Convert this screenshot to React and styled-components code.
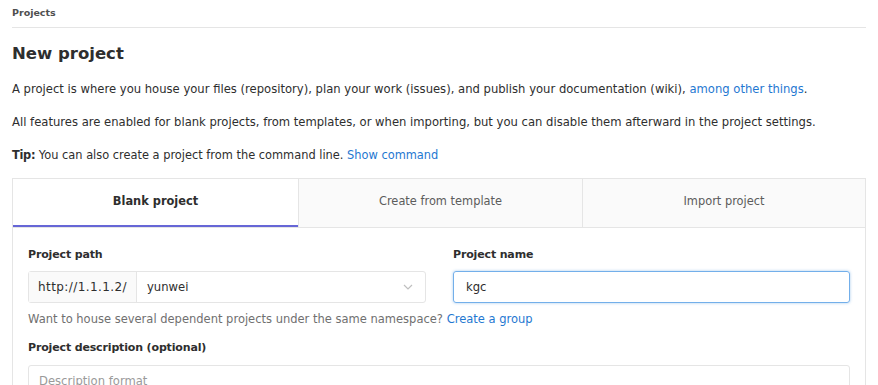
import React from "react";
import styled, { createGlobalStyle } from "styled-components";

const Global = createGlobalStyle`
  html, body { margin: 0; padding: 0; background: #fff; }
  body { font-family: "DejaVu Sans", sans-serif; color: #2e2e2e; }
  * { box-sizing: border-box; }
`;

const Page = styled.div`
  padding: 0 12px 0 12px;
  width: 878px;
  height: 385px;
  overflow: hidden;
`;

const Breadcrumb = styled.div`
  font-size: 9.5px;
  font-weight: 600;
  color: #4f4f4f;
  height: 28px;
  padding-top: 7px;
  border-bottom: 1px solid #e5e5e5;
`;

const Title = styled.h1`
  margin: 16px 0 0;
  font-size: 16.5px;
  font-weight: 600;
  color: #2e2e2e;
  line-height: 20px;
`;

const Para = styled.p`
  margin: ${(p) => p.$top}px 0 0;
  font-size: ${(p) => p.$size || 11.6}px;
  line-height: 16px;
  color: #2e2e2e;
`;

const Strong = styled.b`
  font-weight: 600;
  letter-spacing: -0.3px;
`;

const Link = styled.a`
  color: #1f78d1;
  text-decoration: none;
`;

const Panel = styled.div`
  margin-top: 15px;
  border: 1px solid #e5e5e5;
  border-bottom: none;
  height: 300px;
`;

const Tabs = styled.div`
  display: grid;
  grid-template-columns: 285px 284px 1fr;
  height: 49px;
  border-bottom: 1px solid #e5e5e5;
`;

const Tab = styled.div`
  display: flex;
  align-items: center;
  justify-content: center;
  font-size: 11.4px;
  background: ${(p) => (p.$active ? "#fff" : "#fafafa")};
  color: ${(p) => (p.$active ? "#2e2e2e" : "#5c5c5c")};
  font-weight: ${(p) => (p.$active ? 600 : 400)};
  border-left: ${(p) => (p.$first ? "none" : "1px solid #e5e5e5")};
  box-shadow: ${(p) => (p.$active ? "inset 0 -2px 0 #6666d6" : "none")};
  padding-bottom: 4px;
`;

const Body = styled.div`
  padding: 19px 15px 0 15px;
`;

const Row = styled.div`
  display: grid;
  grid-template-columns: 398px 1fr;
  column-gap: 27px;
`;

const Label = styled.div`
  font-size: 11px;
  font-weight: 600;
  line-height: 16px;
  margin-bottom: 8px;
  color: #2e2e2e;
  letter-spacing: -0.15px;
`;

const InputGroup = styled.div`
  display: flex;
  height: 32px;
  border: 1px solid #e5e5e5;
  border-radius: 3px;
`;

const Addon = styled.div`
  display: flex;
  align-items: center;
  justify-content: center;
  width: 108px;
  background: #fafafa;
  border-right: 1px solid #e5e5e5;
  font-size: 12px;
  letter-spacing: 0.4px;
  color: #2e2e2e;
`;

const Select = styled.div`
  flex: 1;
  display: flex;
  align-items: center;
  justify-content: space-between;
  padding: 0 12px 0 10px;
  font-size: 11.6px;
  color: #2e2e2e;
`;

const Input = styled.div`
  height: 32px;
  border: 1px solid #73afea;
  border-radius: 3px;
  box-shadow: 0 0 3px rgba(31, 120, 209, 0.4);
  display: flex;
  align-items: center;
  padding: 0 12px;
  font-size: 11.6px;
  color: #2e2e2e;
`;

const Help = styled.div`
  font-size: 11.5px;
  color: #707070;
  line-height: 16px;
  margin-top: 8px;
`;

const DescLabel = styled(Label)`
  margin-top: 13px;
  margin-bottom: 9px;
`;

const TextBox = styled.div`
  height: 40px;
  border: 1px solid #e5e5e5;
  border-radius: 3px;
  padding: 8px 10px;
  font-size: 11.6px;
  color: #9a9a9a;
`;

const Chevron = () => (
  <svg width="10" height="6" viewBox="0 0 10 6" fill="none">
    <path d="M1 1l4 4 4-4" stroke="#bfbfbf" strokeWidth="1.2" />
  </svg>
);

export default function App() {
  return (
    <Page>
      <Global />
      <Breadcrumb>Projects</Breadcrumb>
      <Title>New project</Title>
      <Para $top={17}>
        A project is where you house your files (repository), plan your work (issues), and publish your
        documentation (wiki), <Link>among other things</Link>.
      </Para>
      <Para $top={17}>
        All features are enabled for blank projects, from templates, or when importing, but you can disable them
        afterward in the project settings.
      </Para>
      <Para $top={17} $size={11.4}>
        <Strong>Tip:</Strong> You can also create a project from the command line. <Link>Show command</Link>
      </Para>
      <Panel>
        <Tabs>
          <Tab $active $first>Blank project</Tab>
          <Tab>Create from template</Tab>
          <Tab>Import project</Tab>
        </Tabs>
        <Body>
          <Row>
            <div>
              <Label>Project path</Label>
              <InputGroup>
                <Addon>http://1.1.1.2/</Addon>
                <Select>
                  <span>yunwei</span>
                  <Chevron />
                </Select>
              </InputGroup>
            </div>
            <div>
              <Label>Project name</Label>
              <Input>kgc</Input>
            </div>
          </Row>
          <Help>
            Want to house several dependent projects under the same namespace? <Link>Create a group</Link>
          </Help>
          <DescLabel>Project description (optional)</DescLabel>
          <TextBox>Description format</TextBox>
        </Body>
      </Panel>
    </Page>
  );
}
